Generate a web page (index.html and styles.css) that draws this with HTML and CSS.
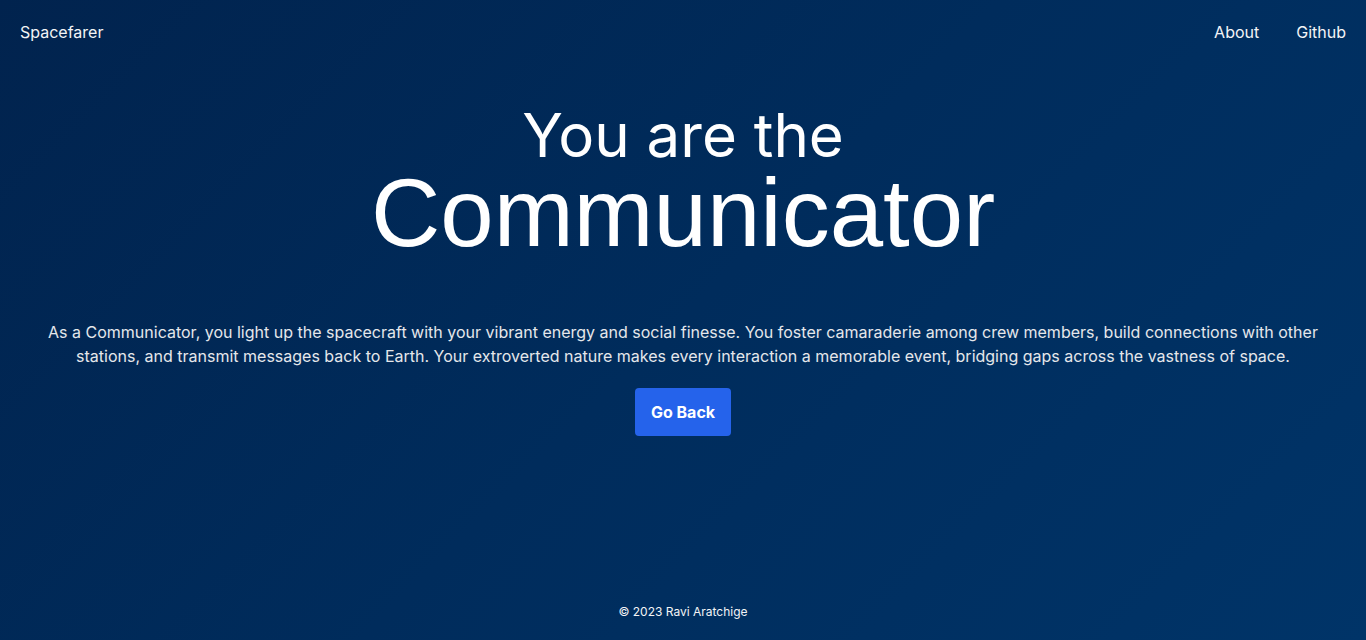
FILE: index.html
```
<!DOCTYPE html>
<html lang="en">
<head>
<meta charset="utf-8">
<title>Spacefarer</title>
<link rel="stylesheet" href="styles.css">
</head>
<body>
<div class="page">
  <nav class="nav">
    <a class="brand" href="#">Spacefarer</a>
    <div class="links">
      <a href="#">About</a>
      <a href="#">Github</a>
    </div>
  </nav>
  <main class="main">
    <h1 class="title">
      <span class="pre">You are the</span>
      <span class="role">Communicator</span>
    </h1>
    <p class="desc">As a Communicator, you light up the spacecraft with your vibrant energy and social finesse. You foster camaraderie among crew members, build connections with other stations, and transmit messages back to Earth. Your extroverted nature makes every interaction a memorable event, bridging gaps across the vastness of space.</p>
    <a class="btn" href="#">Go Back</a>
  </main>
  <footer class="footer">© 2023 Ravi Aratchige</footer>
</div>
</body>
</html>
```
FILE: styles.css
```
* { box-sizing: border-box; }
html, body { margin: 0; padding: 0; height: 100%; }
body {
  font-family: Inter, "Noto Sans", sans-serif;
  color: #fff;
  background: linear-gradient(135deg, #01234e 0%, #002c5c 50%, #003468 100%);
}
a { color: inherit; text-decoration: none; }
.page {
  min-height: 100vh;
  display: flex;
  flex-direction: column;
}
.nav {
  display: flex;
  justify-content: space-between;
  align-items: center;
  padding: 20px 20px;
  font-size: 16px;
  line-height: 24px;
  color: #f3f4f6;
}
.links { display: flex; gap: 37px; }
.main {
  flex: 1;
  display: flex;
  flex-direction: column;
  align-items: center;
  padding: 41px 48px 0;
  text-align: center;
}
.title {
  margin: 0;
  font-weight: 400;
  display: flex;
  flex-direction: column;
  align-items: center;
}
.pre {
  font-family: Inter, "Noto Sans", sans-serif;
  font-size: 60px;
  line-height: 60px;
}
.role {
  font-family: "Liberation Sans", Arial, sans-serif;
  font-size: 96px;
  line-height: 96px;
}
.desc {
  margin: 59px 0 20px;
  font-size: 16px;
  line-height: 24px;
  color: #e5e7eb;
}
.btn {
  display: inline-block;
  background: #2563eb;
  color: #fff;
  font-weight: 700;
  font-size: 16px;
  line-height: 24px;
  padding: 12px 16px;
  border-radius: 4px;
}
.footer {
  text-align: center;
  font-size: 12px;
  line-height: 16px;
  padding: 20px 0 20px;
  color: #f3f4f6;
}
```
